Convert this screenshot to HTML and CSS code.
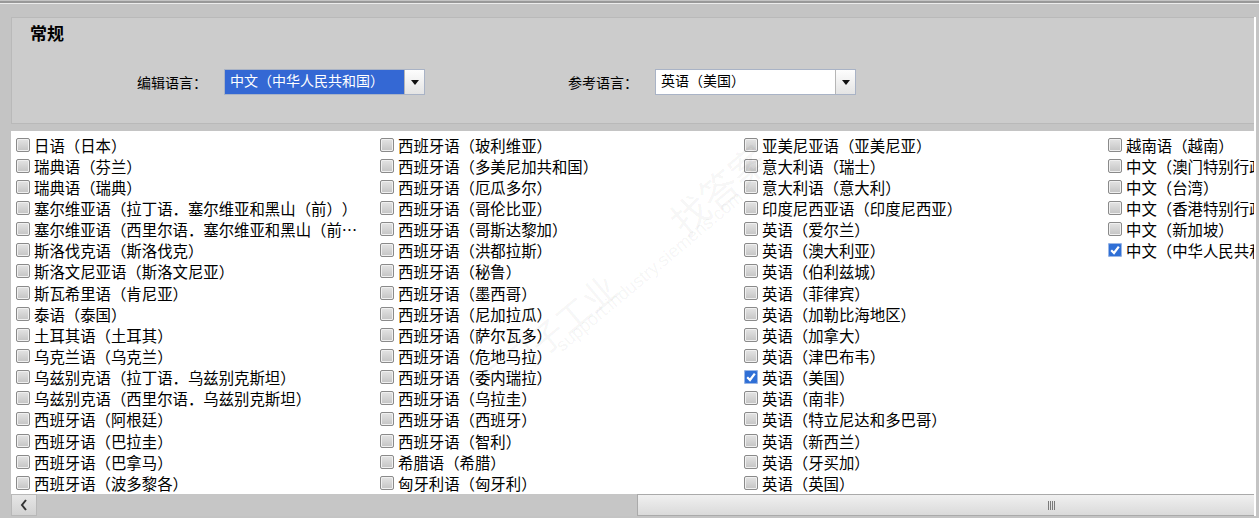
FILE: index.html
```html
<!DOCTYPE html>
<html lang="zh-CN">
<head>
    <meta charset="UTF-8">
    <meta name="viewport" content="width=device-width, initial-scale=1.0">
    <link rel="stylesheet" href="styles.css">
</head>
<body>
    <div class="top-line"></div>
    <div class="band"></div>
    <div class="main">
        <div class="panel">
            <h2 class="title">常规</h2>
            <div class="form-row">
                <label class="lbl">编辑语言：</label>
                <div class="combo combo-active">
                    <span class="combo-text">中文（中华人民共和国）</span>
                    <span class="combo-btn"><span class="tri"></span></span>
                </div>
                <label class="lbl lbl-ref">参考语言：</label>
                <div class="combo">
                    <span class="combo-text">英语（美国）</span>
                    <span class="combo-btn"><span class="tri"></span></span>
                </div>
            </div>
        </div>
        <div class="gap"></div>
        <div class="list">
            <div class="grid">
                <div class="item"><span class="cb"></span><span class="txt">日语（日本）</span></div>
                <div class="item"><span class="cb"></span><span class="txt">瑞典语（芬兰）</span></div>
                <div class="item"><span class="cb"></span><span class="txt">瑞典语（瑞典）</span></div>
                <div class="item"><span class="cb"></span><span class="txt">塞尔维亚语（拉丁语．塞尔维亚和黑山（前））</span></div>
                <div class="item"><span class="cb"></span><span class="txt">塞尔维亚语（西里尔语．塞尔维亚和黑山（前））</span></div>
                <div class="item"><span class="cb"></span><span class="txt">斯洛伐克语（斯洛伐克）</span></div>
                <div class="item"><span class="cb"></span><span class="txt">斯洛文尼亚语（斯洛文尼亚）</span></div>
                <div class="item"><span class="cb"></span><span class="txt">斯瓦希里语（肯尼亚）</span></div>
                <div class="item"><span class="cb"></span><span class="txt">泰语（泰国）</span></div>
                <div class="item"><span class="cb"></span><span class="txt">土耳其语（土耳其）</span></div>
                <div class="item"><span class="cb"></span><span class="txt">乌克兰语（乌克兰）</span></div>
                <div class="item"><span class="cb"></span><span class="txt">乌兹别克语（拉丁语．乌兹别克斯坦）</span></div>
                <div class="item"><span class="cb"></span><span class="txt">乌兹别克语（西里尔语．乌兹别克斯坦）</span></div>
                <div class="item"><span class="cb"></span><span class="txt">西班牙语（阿根廷）</span></div>
                <div class="item"><span class="cb"></span><span class="txt">西班牙语（巴拉圭）</span></div>
                <div class="item"><span class="cb"></span><span class="txt">西班牙语（巴拿马）</span></div>
                <div class="item"><span class="cb"></span><span class="txt">西班牙语（波多黎各）</span></div>

                <div class="item"><span class="cb"></span><span class="txt">西班牙语（玻利维亚）</span></div>
                <div class="item"><span class="cb"></span><span class="txt">西班牙语（多美尼加共和国）</span></div>
                <div class="item"><span class="cb"></span><span class="txt">西班牙语（厄瓜多尔）</span></div>
                <div class="item"><span class="cb"></span><span class="txt">西班牙语（哥伦比亚）</span></div>
                <div class="item"><span class="cb"></span><span class="txt">西班牙语（哥斯达黎加）</span></div>
                <div class="item"><span class="cb"></span><span class="txt">西班牙语（洪都拉斯）</span></div>
                <div class="item"><span class="cb"></span><span class="txt">西班牙语（秘鲁）</span></div>
                <div class="item"><span class="cb"></span><span class="txt">西班牙语（墨西哥）</span></div>
                <div class="item"><span class="cb"></span><span class="txt">西班牙语（尼加拉瓜）</span></div>
                <div class="item"><span class="cb"></span><span class="txt">西班牙语（萨尔瓦多）</span></div>
                <div class="item"><span class="cb"></span><span class="txt">西班牙语（危地马拉）</span></div>
                <div class="item"><span class="cb"></span><span class="txt">西班牙语（委内瑞拉）</span></div>
                <div class="item"><span class="cb"></span><span class="txt">西班牙语（乌拉圭）</span></div>
                <div class="item"><span class="cb"></span><span class="txt">西班牙语（西班牙）</span></div>
                <div class="item"><span class="cb"></span><span class="txt">西班牙语（智利）</span></div>
                <div class="item"><span class="cb"></span><span class="txt">希腊语（希腊）</span></div>
                <div class="item"><span class="cb"></span><span class="txt">匈牙利语（匈牙利）</span></div>

                <div class="item"><span class="cb"></span><span class="txt">亚美尼亚语（亚美尼亚）</span></div>
                <div class="item"><span class="cb"></span><span class="txt">意大利语（瑞士）</span></div>
                <div class="item"><span class="cb"></span><span class="txt">意大利语（意大利）</span></div>
                <div class="item"><span class="cb"></span><span class="txt">印度尼西亚语（印度尼西亚）</span></div>
                <div class="item"><span class="cb"></span><span class="txt">英语（爱尔兰）</span></div>
                <div class="item"><span class="cb"></span><span class="txt">英语（澳大利亚）</span></div>
                <div class="item"><span class="cb"></span><span class="txt">英语（伯利兹城）</span></div>
                <div class="item"><span class="cb"></span><span class="txt">英语（菲律宾）</span></div>
                <div class="item"><span class="cb"></span><span class="txt">英语（加勒比海地区）</span></div>
                <div class="item"><span class="cb"></span><span class="txt">英语（加拿大）</span></div>
                <div class="item"><span class="cb"></span><span class="txt">英语（津巴布韦）</span></div>
                <div class="item"><span class="cb checked"><svg viewBox="0 0 14 14" width="14" height="14"><path d="M3.2 7.2 L6 10 L10.8 3.6" fill="none" stroke="#fff" stroke-width="2.2"/></svg></span><span class="txt">英语（美国）</span></div>
                <div class="item"><span class="cb"></span><span class="txt">英语（南非）</span></div>
                <div class="item"><span class="cb"></span><span class="txt">英语（特立尼达和多巴哥）</span></div>
                <div class="item"><span class="cb"></span><span class="txt">英语（新西兰）</span></div>
                <div class="item"><span class="cb"></span><span class="txt">英语（牙买加）</span></div>
                <div class="item"><span class="cb"></span><span class="txt">英语（英国）</span></div>

                <div class="item"><span class="cb"></span><span class="txt">越南语（越南）</span></div>
                <div class="item"><span class="cb"></span><span class="txt">中文（澳门特别行政区）</span></div>
                <div class="item"><span class="cb"></span><span class="txt">中文（台湾）</span></div>
                <div class="item"><span class="cb"></span><span class="txt">中文（香港特别行政区）</span></div>
                <div class="item"><span class="cb"></span><span class="txt">中文（新加坡）</span></div>
                <div class="item"><span class="cb checked"><svg viewBox="0 0 14 14" width="14" height="14"><path d="M3.2 7.2 L6 10 L10.8 3.6" fill="none" stroke="#fff" stroke-width="2.2"/></svg></span><span class="txt">中文（中华人民共和国）</span></div>
            </div>

            <!-- faint watermark from the original capture -->
            <span class="wm wm-1">找答案</span>
            <span class="wm wm-2">西门子工业</span>
            <span class="wm wm-3">support.industry.siemens.com</span>
        </div>
        <div class="hscroll">
            <span class="sb-btn">
                <svg viewBox="0 0 10 14" width="10" height="14"><path d="M7 2 L3 7 L7 12" fill="none" stroke="#333" stroke-width="2"/></svg>
            </span>
            <span class="sb-track"></span>
            <span class="sb-thumb"><span class="grip"></span></span>
        </div>
    </div>
</body>
</html>
```

FILE: styles.css
```css
html, body {
    margin: 0;
    height: 100%;
    overflow: hidden;
}

body {
    font-family: "Noto Sans CJK SC", "Liberation Sans", sans-serif;
    background-color: #c4c4c4;
    color: #000;
    text-spacing-trim: space-all;
}

.top-line {
    height: 2px;
    margin-top: 1px;
    background-color: #999;
    border-bottom: 1px solid #ececec;
}

.band {
    height: 13px;
}

.main {
    margin-left: 11px;
    width: 1243px;
    border-right: 2px solid #fff;
}

.panel {
    height: 105px;
    background-color: #cccccc;
    border: 1px solid #b9b9b9;
    border-right: none;
}

.title {
    margin: 0;
    padding: 4px 0 0 18px;
    font-size: 17px;
    font-weight: bold;
    line-height: 22px;
}

.form-row {
    display: flex;
    align-items: center;
    padding: 25px 0 0 125px;
}

.lbl {
    font-size: 14px;
    width: 87px;
    line-height: 20px;
}

.lbl-ref {
    margin-left: 143px;
}

.combo {
    display: flex;
    width: 199px;
    height: 24px;
    border: 1px solid #a9b3c6;
    background-color: #fff;
    font-size: 14px;
}

.combo-text {
    flex: 1;
    padding: 0 5px;
    line-height: 20px;
    white-space: nowrap;
    overflow: hidden;
}

.combo-active .combo-text {
    background-color: #3468d4;
    color: #fff;
}

.combo-btn {
    flex: none;
    width: 19px;
    display: flex;
    align-items: center;
    justify-content: center;
    background: linear-gradient(#fdfdfd, #e4e4e4);
    border-left: 1px solid #b6b6b6;
}

.tri {
    width: 0;
    height: 0;
    border-left: 4px solid transparent;
    border-right: 4px solid transparent;
    border-top: 5px solid #111;
}

.gap {
    height: 7px;
}

.list {
    position: relative;
    height: 363px;
    background-color: #fff;
    overflow: hidden;
}

.grid {
    display: grid;
    grid-auto-flow: column;
    grid-template-rows: repeat(17, 21.15px);
    grid-auto-columns: 364px;
    padding: 3px 0 0 5px;
}

.item {
    display: flex;
    align-items: center;
    gap: 4px;
    min-width: 0;
    font-size: 15.4px;
    white-space: nowrap;
}

.txt {
    overflow: hidden;
    text-overflow: ellipsis;
    margin-right: 8px;
}

.cb {
    flex: none;
    width: 12px;
    height: 12px;
    border: 1px solid #8a8a8a;
    border-radius: 2px;
    background: linear-gradient(#e4e4e4, #c4c4c4);
    box-shadow: inset 0 0 0 1px #f0f0f0;
}

.cb.checked {
    width: 14px;
    height: 14px;
    border: none;
    background: #2f6fd6;
    box-shadow: inset 0 0 0 1px #9cb8e6;
    display: flex;
}

.wm {
    position: absolute;
    color: rgba(0, 0, 0, 0.05);
    transform: rotate(-40deg);
    white-space: nowrap;
    pointer-events: none;
}

.wm-1 {
    left: 650px;
    top: 30px;
    font-size: 38px;
}

.wm-2 {
    left: 450px;
    top: 180px;
    font-size: 34px;
}

.wm-3 {
    left: 520px;
    top: 130px;
    font-size: 18px;
    font-family: "Liberation Sans", sans-serif;
}

.hscroll {
    display: flex;
    height: 22px;
    background-color: #c6c6c6;
}

.sb-btn {
    flex: none;
    width: 24px;
    display: flex;
    align-items: center;
    justify-content: center;
    background: linear-gradient(#e6e6e6, #d2d2d2);
    border: 1px solid #b8b8b8;
}

.sb-track {
    flex: none;
    width: 600px;
}

.sb-thumb {
    flex: 1;
    display: flex;
    align-items: center;
    justify-content: center;
    padding-left: 210px;
    background: linear-gradient(#f0f0f0, #dadada);
    border: 1px solid #aaa;
    border-right: none;
}

.grip {
    width: 7px;
    height: 9px;
    background: repeating-linear-gradient(90deg, #7a7a7a 0 1px, transparent 1px 2px);
}
```
